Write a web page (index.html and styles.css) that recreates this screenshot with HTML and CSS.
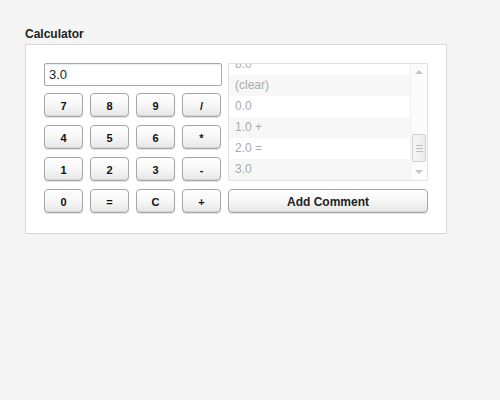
FILE: index.html
```html
<!DOCTYPE html>
<html>
<head>
<meta charset="utf-8">
<link rel="stylesheet" href="styles.css">
</head>
<body>
<h1 class="title">Calculator</h1>
<div class="panel">
  <div class="left">
    <div class="display">3.0</div>
    <div class="keys">
      <button class="btn">7</button><button class="btn">8</button><button class="btn">9</button><button class="btn">/</button>
      <button class="btn">4</button><button class="btn">5</button><button class="btn">6</button><button class="btn">*</button>
      <button class="btn">1</button><button class="btn">2</button><button class="btn">3</button><button class="btn">-</button>
      <button class="btn">0</button><button class="btn">=</button><button class="btn">C</button><button class="btn">+</button>
    </div>
  </div>
  <div class="right">
    <div class="list">
      <div class="items">
        <div class="item partial">8.0</div>
        <div class="item alt">(clear)</div>
        <div class="item">0.0</div>
        <div class="item alt">1.0 +</div>
        <div class="item">2.0 =</div>
        <div class="item alt">3.0</div>
      </div>
      <div class="scrollbar">
        <div class="arrow up"></div>
        <div class="track">
          <div class="thumb"><span class="grip"></span><span class="grip"></span><span class="grip"></span></div>
        </div>
        <div class="arrow down"></div>
      </div>
    </div>
    <button class="btn wide">Add Comment</button>
  </div>
</div>
</body>
</html>
```
FILE: styles.css
```css
html, body {
  margin: 0;
  padding: 0;
  background: #f4f4f4;
  font-family: "Liberation Sans", Arial, sans-serif;
}
body {
  padding: 27px 0 0 25px;
}
.title {
  margin: 0 0 3px 0;
  font-size: 12px;
  line-height: 14px;
  font-weight: bold;
  color: #222;
}
.panel {
  width: 384px;
  background: #fff;
  border: 1px solid #d8d8d8;
  padding: 18px 18px 20px 18px;
  display: flex;
  gap: 6px;
}
.left {
  width: 178px;
  display: flex;
  flex-direction: column;
  gap: 7px;
}
.display {
  height: 23px;
  box-sizing: border-box;
  border: 1px solid #a8a8a8;
  border-radius: 2px;
  box-shadow: inset 0 1px 1px rgba(0,0,0,0.08);
  font-size: 13px;
  line-height: 21px;
  padding-left: 4px;
  color: #222;
}
.keys {
  display: grid;
  grid-template-columns: repeat(4, 39px);
  column-gap: 7px;
  row-gap: 8px;
}
.btn {
  height: 24px;
  margin: 0;
  padding: 1px 0 0 0;
  box-sizing: border-box;
  border: 1px solid #a6a6a6;
  border-radius: 4px;
  background: linear-gradient(#ffffff 0%, #f7f7f7 50%, #e6e6e6 100%);
  box-shadow: 0 1px 1px rgba(0,0,0,0.12), inset 0 -1px 0 #d4d4d4;
  font-family: "Liberation Sans", Arial, sans-serif;
  font-size: 11px;
  font-weight: bold;
  color: #111;
}
.right {
  width: 200px;
  display: flex;
  flex-direction: column;
  gap: 8px;
}
.list {
  height: 118px;
  box-sizing: border-box;
  border: 1px solid #e2e2e2;
  display: flex;
  overflow: hidden;
}
.items {
  flex: 1;
  display: flex;
  flex-direction: column;
  justify-content: flex-end;
  overflow: hidden;
}
.item {
  flex: none;
  height: 21px;
  line-height: 21px;
  padding-left: 6px;
  font-size: 12px;
  color: #aaa;
  background: #fff;
}
.item.alt {
  background: #f7f7f7;
}
.scrollbar {
  width: 16px;
  background: #fbfbfb;
  border-left: 1px solid #f0f0f0;
  display: flex;
  flex-direction: column;
}
.arrow {
  height: 16px;
  display: flex;
  align-items: center;
  justify-content: center;
}
.arrow.up::before {
  content: "";
  border-left: 4px solid transparent;
  border-right: 4px solid transparent;
  border-bottom: 4px solid #c4c4c4;
}
.arrow.down::before {
  content: "";
  border-left: 4px solid transparent;
  border-right: 4px solid transparent;
  border-top: 4px solid #c4c4c4;
}
.track {
  flex: 1;
  display: flex;
  flex-direction: column;
  justify-content: flex-end;
  padding-bottom: 2px;
}
.thumb {
  height: 28px;
  margin: 0 1px;
  box-sizing: border-box;
  border: 1px solid #cfcfcf;
  border-radius: 2px;
  background: linear-gradient(90deg, #f6f6f6, #ececec);
  display: flex;
  flex-direction: column;
  align-items: center;
  justify-content: center;
  gap: 2px;
}
.grip {
  width: 7px;
  height: 1px;
  background: #c0c0c0;
}
.btn.wide {
  width: 200px;
  font-size: 12px;
  color: #222;
}
```
